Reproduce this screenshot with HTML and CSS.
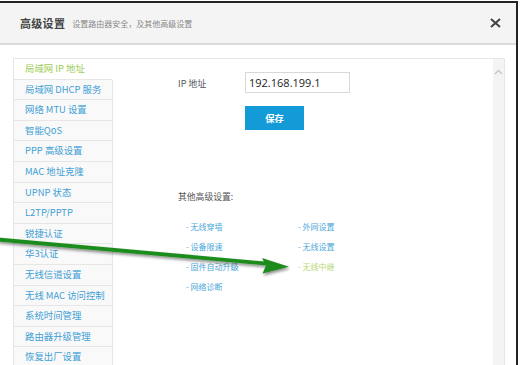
FILE: index.html
```html
<!DOCTYPE html>
<html lang="zh-CN">
<head>
  <meta charset="UTF-8" />
  <meta name="viewport" content="width=device-width,initial-scale=1.0"/>
  <title>高级设置</title>
  <link rel="stylesheet" href="styles.css">
</head>
<body>

<div id="win">
  <div id="header">
    <span class="title">高级设置</span>
    <span class="subtitle">设置路由器安全，及其他高级设置</span>
    <svg class="close" width="11" height="10" viewBox="0 0 11 10">
      <path d="M1 1 L10 9 M10 1 L1 9" stroke="#444" stroke-width="2" fill="none"/>
    </svg>
  </div>

  <div id="body">
    <div id="panel">
      <ul id="menu">
        <li class="active">局域网 IP 地址</li>
        <li>局域网 DHCP 服务</li>
        <li>网络 MTU 设置</li>
        <li>智能QoS</li>
        <li>PPP 高级设置</li>
        <li>MAC 地址克隆</li>
        <li>UPNP 状态</li>
        <li>L2TP/PPTP</li>
        <li>锐捷认证</li>
        <li>华3认证</li>
        <li>无线信道设置</li>
        <li>无线 MAC 访问控制</li>
        <li>系统时间管理</li>
        <li>路由器升级管理</li>
        <li>恢复出厂设置</li>
      </ul>

      <div id="main">
        <div class="row">
          <label>IP 地址</label>
          <input type="text" value="192.168.199.1">
        </div>
        <button id="saveBtn">保存</button>

        <div class="otherTitle">其他高级设置:</div>
        <div class="links">
          <a>- 无线穿墙</a>
          <a>- 外网设置</a>
          <a>- 设备限速</a>
          <a>- 无线设置</a>
          <a>- 固件自动升级</a>
          <a class="hot">- 无线中继</a>
          <a>- 网络诊断</a>
        </div>
      </div>

      <div id="scroll">
        <svg width="9" height="6" viewBox="0 0 9 6">
          <polyline points="1,5 4.5,1.5 8,5" stroke="#c4c4c4" stroke-width="1.3" fill="none"/>
        </svg>
      </div>
    </div>
  </div>
</div>

<!-- arrow drawn over the screenshot -->
<svg id="arrow" width="521" height="365" viewBox="0 0 521 365">
  <defs>
    <filter id="sh" x="-10%" y="-50%" width="120%" height="200%">
      <feDropShadow dx="1" dy="2" stdDeviation="1.5" flood-color="#000" flood-opacity="0.45"/>
    </filter>
  </defs>
  <g filter="url(#sh)" fill="#1f8c1f">
    <path d="M-2 237.5 L268 261.8 L267.6 265.6 L-2 241.5 Z"/>
    <path d="M262 258 L289 266.8 L262.5 273.5 L266 265.5 Z"/>
  </g>
</svg>

</body>
</html>
```

FILE: styles.css
```css
html, body {
  margin: 0;
  padding: 0;
  height: 100%;
  overflow: hidden;
  background: #fff;
  font-family: "Noto Sans CJK SC", "Liberation Sans", sans-serif;
}

#win {
  width: 516px;
  height: 363px;
  margin-top: 1px;
  border-top: 2px solid #232323;
  border-right: 2px solid #232323;
  overflow: hidden;
}

#header {
  height: 40px;
  background: #f4f4f4;
  border-bottom: 2px solid #dcdcdc;
  display: flex;
  align-items: center;
  padding-left: 20px;
  padding-right: 15px;
}

#header .title {
  font-size: 11px;
  font-weight: bold;
  color: #444;
  letter-spacing: 0.3px;
}

#header .subtitle {
  font-size: 8px;
  color: #888;
  margin-left: 7px;
}

#header .close {
  margin-left: auto;
}

#body {
  padding: 13px 0 0 13px;
}

#panel {
  width: 490px;
  height: 320px;
  border: 1px solid #e6e6e6;
  border-bottom: none;
  display: flex;
}

#menu {
  list-style: none;
  margin: 0;
  padding: 0;
  width: 99px;
  flex-shrink: 0;
}

#menu li {
  box-sizing: border-box;
  height: 20.6px;
  line-height: 19.6px;
  padding-left: 11px;
  font-size: 9.4px;
  color: #3f9fd6;
  background: #f9f9f9;
  border-bottom: 1px solid #e6e6e6;
  border-right: 1px solid #e6e6e6;
  white-space: nowrap;
}

#menu li.active {
  color: #9ccb55;
  background: #fff;
  border-right-color: #fff;
}

#main {
  flex: 1;
  padding: 13px 0 0 65px;
}

.row {
  display: flex;
  align-items: center;
}

.row label {
  width: 67px;
  font-size: 9px;
  color: #555;
  line-height: 16px;
  padding-top: 2px;
}

.row input {
  box-sizing: border-box;
  width: 105px;
  height: 21px;
  border: 1px solid #d8d8d8;
  padding: 0 0 0 3px;
  font-family: "Open Sans", "Liberation Sans", sans-serif;
  font-size: 11px;
  color: #222;
  outline: none;
}

#saveBtn {
  display: block;
  margin: 13px 0 0 67px;
  width: 59px;
  height: 24px;
  border: none;
  background: #139bd7;
  color: #fff;
  font-family: inherit;
  font-size: 9.3px;
  font-weight: bold;
  padding: 0;
}

.otherTitle {
  margin-top: 59px;
  font-size: 8.8px;
  line-height: 16px;
  color: #555;
}

.links {
  display: grid;
  grid-template-columns: 112px 112px;
  margin: 12px 0 0 8px;
}

.links a {
  font-size: 8px;
  line-height: 20px;
  color: #4aa7d9;
  white-space: nowrap;
}

.links a.hot {
  color: #b6d774;
}

#scroll {
  width: 11px;
  flex-shrink: 0;
  background: #f4f4f4;
  display: flex;
  justify-content: center;
  padding-top: 10px;
  align-items: flex-start;
}

#arrow {
  position: absolute;
  left: 0;
  top: 0;
  pointer-events: none;
}
```
